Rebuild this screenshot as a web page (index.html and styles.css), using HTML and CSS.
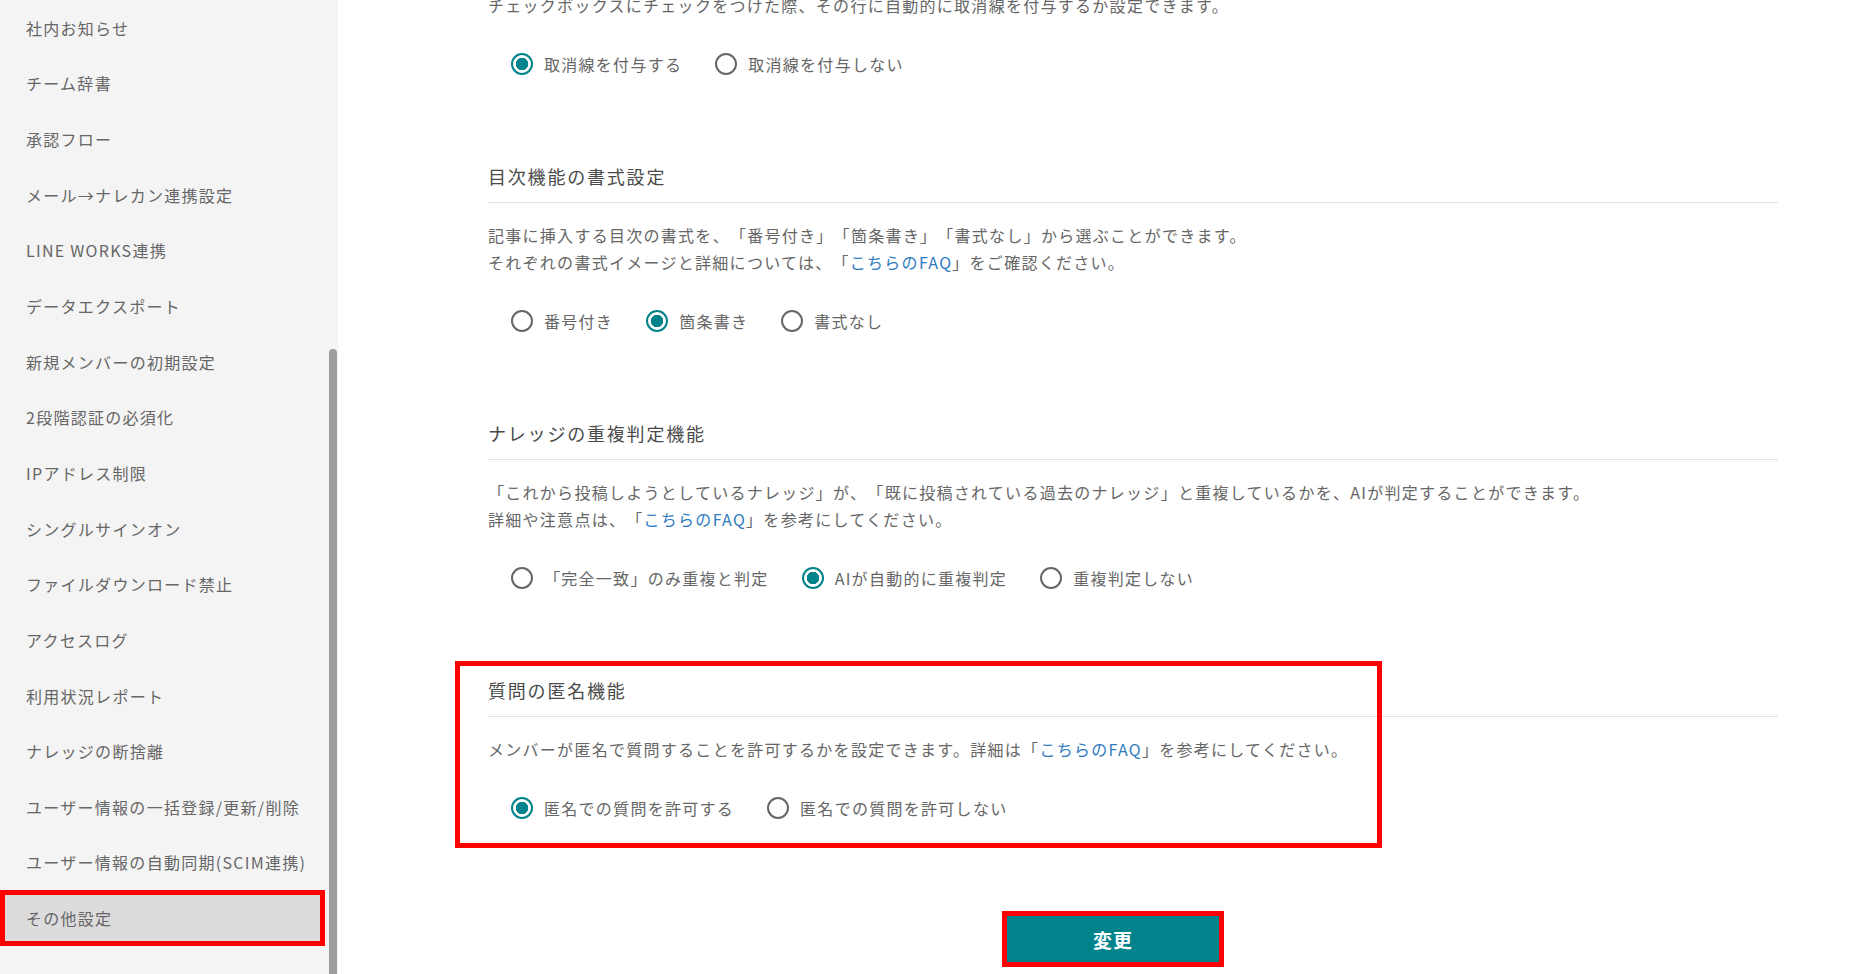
FILE: index.html
```
<!DOCTYPE html>
<html lang="ja">
<head>
  <meta charset="UTF-8">
  <meta name="viewport" content="width=device-width, initial-scale=1.0">
  <title>その他設定</title>
  <link rel="stylesheet" href="styles.css">
</head>
<body>
  <div class="sidebar">
    <ul class="side-menu">
      <li class="menu-item">社内お知らせ</li>
      <li class="menu-item">チーム辞書</li>
      <li class="menu-item">承認フロー</li>
      <li class="menu-item">メール→ナレカン連携設定</li>
      <li class="menu-item">LINE WORKS連携</li>
      <li class="menu-item">データエクスポート</li>
      <li class="menu-item">新規メンバーの初期設定</li>
      <li class="menu-item">2段階認証の必須化</li>
      <li class="menu-item">IPアドレス制限</li>
      <li class="menu-item">シングルサインオン</li>
      <li class="menu-item">ファイルダウンロード禁止</li>
      <li class="menu-item">アクセスログ</li>
      <li class="menu-item">利用状況レポート</li>
      <li class="menu-item">ナレッジの断捨離</li>
      <li class="menu-item">ユーザー情報の一括登録/更新/削除</li>
      <li class="menu-item">ユーザー情報の自動同期(SCIM連携)</li>
      <li class="menu-item active">その他設定</li>
    </ul>
    <div class="scroll-thumb"></div>
  </div>

  <div class="main">
    <div class="setting-section first">
      <p class="setting-desc">チェックボックスにチェックをつけた際、その行に自動的に取消線を付与するか設定できます。</p>
      <div class="options">
        <label class="option"><input type="radio" name="strike" checked>取消線を付与する</label>
        <label class="option"><input type="radio" name="strike">取消線を付与しない</label>
      </div>
    </div>

    <div class="setting-section">
      <h2 class="setting-title">目次機能の書式設定</h2>
      <p class="setting-desc">記事に挿入する目次の書式を、「番号付き」「箇条書き」「書式なし」から選ぶことができます。<br>それぞれの書式イメージと詳細については、「<a href="#">こちらのFAQ</a>」をご確認ください。</p>
      <div class="options">
        <label class="option"><input type="radio" name="toc">番号付き</label>
        <label class="option"><input type="radio" name="toc" checked>箇条書き</label>
        <label class="option"><input type="radio" name="toc">書式なし</label>
      </div>
    </div>

    <div class="setting-section">
      <h2 class="setting-title">ナレッジの重複判定機能</h2>
      <p class="setting-desc">「これから投稿しようとしているナレッジ」が、「既に投稿されている過去のナレッジ」と重複しているかを、AIが判定することができます。<br>詳細や注意点は、「<a href="#">こちらのFAQ</a>」を参考にしてください。</p>
      <div class="options">
        <label class="option"><input type="radio" name="dup">「完全一致」のみ重複と判定</label>
        <label class="option"><input type="radio" name="dup" checked>AIが自動的に重複判定</label>
        <label class="option"><input type="radio" name="dup">重複判定しない</label>
      </div>
    </div>

    <div class="setting-section highlighted">
      <h2 class="setting-title">質問の匿名機能</h2>
      <p class="setting-desc">メンバーが匿名で質問することを許可するかを設定できます。詳細は「<a href="#">こちらのFAQ</a>」を参考にしてください。</p>
      <div class="options">
        <label class="option"><input type="radio" name="anon" checked>匿名での質問を許可する</label>
        <label class="option"><input type="radio" name="anon">匿名での質問を許可しない</label>
      </div>
      <div class="mark-frame"></div>
    </div>

    <div class="actions">
      <button class="btn-submit">変更</button>
    </div>
  </div>
</body>
</html>
```

FILE: styles.css
```
:root {
  --teal: #00838a;
  --mark-red: #ff0000;
  --text-color: #666666;
  --title-color: #4a4a4a;
  --link-color: #2f7bbf;
  --border-color: #e3e3e3;
  --side-bg: #f4f4f4;
}

body {
  margin: 0;
  height: 974px;
  overflow: hidden;
  display: flex;
  font-family: "Noto Sans CJK JP", "Noto Sans", sans-serif;
  color: var(--text-color);
  background-color: #ffffff;
  text-spacing-trim: space-all;
}

/* sidebar */
.sidebar {
  position: relative;
  width: 338px;
  flex-shrink: 0;
  background-color: var(--side-bg);
}

.side-menu {
  list-style: none;
  margin: 0;
  padding: 0;
  width: 325px;
}

.menu-item {
  height: 55.65px;
  display: flex;
  align-items: center;
  padding-left: 26px;
  box-sizing: border-box;
  font-size: 16px;
  letter-spacing: 0.08em;
  color: var(--text-color);
}

.menu-item.active {
  background-color: #dcdcdc;
  border: 5px solid var(--mark-red);
  padding-left: 21px;
}

.scroll-thumb {
  position: absolute;
  left: 329px;
  top: 349px;
  width: 8px;
  height: 660px;
  border-radius: 4px;
  background-color: #9e9e9e;
}

/* main */
.main {
  flex: 1;
  padding: 0 73px 0 150px;
}

.setting-section {
  position: relative;
  margin-bottom: 84px;
}

.setting-title {
  margin: 0;
  padding-bottom: 13px;
  border-bottom: 1px solid var(--border-color);
  font-size: 18px;
  line-height: 26px;
  font-weight: 400;
  letter-spacing: 0.1em;
  color: var(--title-color);
}

.setting-desc {
  margin: 19px 0 0 0;
  font-size: 16px;
  line-height: 27px;
  letter-spacing: 0.08em;
}

.first .setting-desc {
  margin-top: -8px;
}

.setting-desc a {
  color: var(--link-color);
  text-decoration: none;
}

.options {
  display: flex;
  align-items: center;
  height: 30px;
  margin-top: 30px;
  padding-left: 23px;
}

.option {
  display: flex;
  align-items: center;
  margin-right: 33px;
  font-size: 16px;
  letter-spacing: 0.08em;
  color: var(--text-color);
}

.option input {
  appearance: none;
  -webkit-appearance: none;
  width: 22px;
  height: 22px;
  margin: 0 11px 0 0;
  border: 2px solid #666666;
  border-radius: 50%;
  box-sizing: border-box;
  background-color: #ffffff;
}

.option input:checked {
  border: 2.5px solid var(--teal);
  background: radial-gradient(circle, var(--teal) 0 6px, #ffffff 6.5px);
}

.mark-frame {
  position: absolute;
  left: -33px;
  top: -16px;
  width: 927px;
  height: 187px;
  border: 5px solid var(--mark-red);
  box-sizing: border-box;
  pointer-events: none;
}

.actions {
  padding: 4px 0 0 514px;
}

.btn-submit {
  width: 222px;
  height: 56px;
  border: 5px solid var(--mark-red);
  background-color: var(--teal);
  color: #ffffff;
  font-family: inherit;
  font-size: 19px;
  font-weight: 700;
  letter-spacing: 0.05em;
  cursor: pointer;
}
```
